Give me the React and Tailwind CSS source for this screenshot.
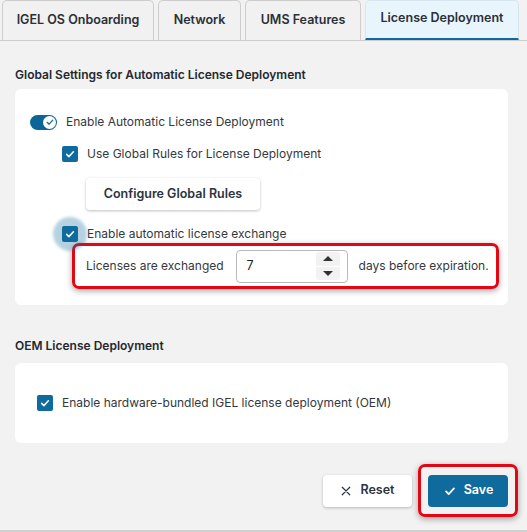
import React from 'react';

const Check = ({ className = 'w-3 h-3' }) => (
  <svg viewBox="0 0 16 16" className={className} fill="none" stroke="currentColor" strokeWidth="2" strokeLinecap="round" strokeLinejoin="round">
    <path d="M3.5 8.5l3 3 6-6.5" />
  </svg>
);

function Checkbox({ focus }) {
  return (
    <div className="relative w-[16px] h-[16px] shrink-0">
      {focus && <div className="absolute -inset-[9px] rounded-full bg-[#0e6a9c]/30 blur-[1.5px]" />}
      <div className="relative w-[16px] h-[16px] rounded-[2px] bg-[#0f6a9d] text-white flex items-center justify-center">
        <Check className="w-[12px] h-[12px]" />
      </div>
    </div>
  );
}

function Tab({ label, width, active }) {
  return (
    <div
      className={
        'h-[40px] flex items-center justify-center rounded-t-[5px] border border-b-0 text-[12.5px] font-semibold text-[#2b2f36] ' +
        (active ? 'bg-[#e9f5fc] border-[#d7e6ee] border-b-2 border-b-[#0f6a9d] pb-[2px]' : 'bg-[#f1f1f1] border-[#cdcdcd]')
      }
      style={{ width }}
    >
      {label}
    </div>
  );
}

export default function App() {
  return (
    <div className="w-[527px] h-[532px] bg-[#f2f2f2] border-b-2 border-[#cfcfcf] overflow-hidden text-[#333840]" style={{ fontFamily: 'Inter, "Liberation Sans", sans-serif' }}>
      <div className="flex items-end gap-[4px] pl-[2px] border-b border-[#cdcdcd] h-[41px] pt-[1px]">
        <Tab label="IGEL OS Onboarding" width={152} />
        <Tab label="Network" width={83} />
        <Tab label="UMS Features" width={116} />
        <Tab label="License Deployment" width={154} active />
      </div>

      <div className="px-[15px]">
        <div className="pt-[25px] h-[48px] text-[12px] font-semibold text-[#24282e]">Global Settings for Automatic License Deployment</div>

        <div className="bg-white rounded-[6px] w-[493px] h-[216px] pt-[24px] pl-[15px]">
          <div className="flex items-center gap-[9px] h-[18px]">
            <div className="w-[27px] h-[15px] rounded-full bg-[#0c6597] flex items-center justify-end pr-[1px]">
              <div className="w-[13px] h-[13px] rounded-full bg-white text-[#0f6a9d] flex items-center justify-center">
                <Check className="w-[10px] h-[10px]" />
              </div>
            </div>
            <span className="text-[12px]">Enable Automatic License Deployment</span>
          </div>

          <div className="pl-[32px]">
            <div className="flex items-center gap-[9px] mt-[14px] h-[18px]">
              <Checkbox />
              <span className="text-[12px]">Use Global Rules for License Deployment</span>
            </div>

            <div className="pl-[24px] mt-[15px]">
              <button className="w-[174px] h-[32px] bg-white rounded-[4px] shadow-[0_1px_3px_rgba(0,0,0,0.25)] text-[12.5px] font-semibold text-[#2a3440]">
                Configure Global Rules
              </button>
            </div>

            <div className="flex items-center gap-[9px] mt-[16px] h-[16px]">
              <Checkbox focus />
              <span className="text-[12px]">Enable automatic license exchange</span>
            </div>

            <div className="ml-[10px] mt-[1px] w-[427px] h-[46px] rounded-[7px] border-[3px] border-[#e30613] shadow-[0_2px_6px_rgba(0,0,0,0.35)] flex items-center pl-[11px] whitespace-nowrap">
              <span className="text-[12px] text-[#333840]">Licenses are exchanged</span>
              <div className="ml-[12px] w-[112px] h-[33px] rounded-[4px] border border-[#b9b9b9] flex items-center pl-[10px] pr-[7px]">
                <span className="flex-1 text-[12.5px] text-[#1f2328]">7</span>
                <div className="w-[24px] h-[28px] flex flex-col gap-[1px]">
                  <div className="flex-1 bg-[#f2f2f2] rounded-t-[3px] flex items-center justify-center">
                    <div className="w-0 h-0 border-l-[5px] border-r-[5px] border-b-[5px] border-l-transparent border-r-transparent border-b-[#333]" />
                  </div>
                  <div className="flex-1 bg-[#f2f2f2] rounded-b-[3px] flex items-center justify-center">
                    <div className="w-0 h-0 border-l-[5px] border-r-[5px] border-t-[5px] border-l-transparent border-r-transparent border-t-[#333]" />
                  </div>
                </div>
              </div>
              <span className="ml-[11px] text-[12px] text-[#333840]">days before expiration.</span>
            </div>
          </div>
        </div>

        <div className="pt-[32px] h-[58px] text-[12px] font-semibold text-[#24282e]">OEM License Deployment</div>

        <div className="bg-white rounded-[6px] w-[493px] h-[80px] flex items-center pl-[22px] gap-[9px]">
          <Checkbox />
          <span className="text-[12px]">Enable hardware-bundled IGEL license deployment (OEM)</span>
        </div>

        <div className="flex justify-end items-center mt-[21px] w-[503px]">
          <button className="w-[89px] h-[32px] bg-white rounded-[4px] shadow-[0_1px_3px_rgba(0,0,0,0.25)] flex items-center justify-center gap-[8px] text-[12.5px] font-semibold text-[#2a3440]">
            <svg viewBox="0 0 16 16" className="w-[12px] h-[12px]" fill="none" stroke="currentColor" strokeWidth="1.6" strokeLinecap="round">
              <path d="M3 3l10 10M13 3L3 13" />
            </svg>
            Reset
          </button>
          <div className="ml-[6px] w-[100px] h-[53px] rounded-[7px] border-[3px] border-[#e30613] shadow-[0_2px_6px_rgba(0,0,0,0.35)] flex items-center justify-center">
            <button className="w-[80px] h-[32px] bg-[#0f6a9d] rounded-[4px] flex items-center justify-center gap-[7px] text-[12.5px] font-semibold text-white">
              <Check className="w-[14px] h-[14px]" />
              Save
            </button>
          </div>
        </div>
      </div>
    </div>
  );
}
